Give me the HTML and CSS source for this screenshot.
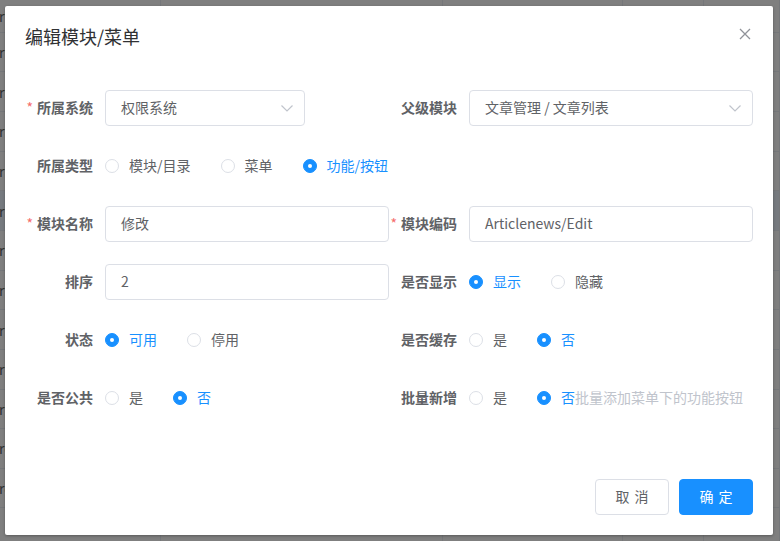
FILE: index.html
```html
<!DOCTYPE html>
<html lang="zh-CN">
<head>
<meta charset="utf-8">
<title>编辑模块/菜单</title>
<link rel="stylesheet" href="styles.css">
</head>
<body>
<div class="page">
  <div class="bg-table">
    <div class="bg-row head"><span class="c">rt</span><span class="c"></span><span class="c"></span><span class="c"></span><span class="c"></span></div>
    <div class="bg-row"><span class="c">rt</span><span class="c"></span><span class="c"></span><span class="c"></span><span class="c"></span></div>
    <div class="bg-row"><span class="c">rt</span><span class="c"></span><span class="c"></span><span class="c"></span><span class="c"></span></div>
    <div class="bg-row"><span class="c">rt</span><span class="c"></span><span class="c"></span><span class="c"></span><span class="c"></span></div>
    <div class="bg-row"><span class="c">rt</span><span class="c"></span><span class="c"></span><span class="c"></span><span class="c"></span></div>
    <div class="bg-row hl"><span class="c">rt</span><span class="c"></span><span class="c"></span><span class="c"></span><span class="c"></span></div>
    <div class="bg-row"><span class="c">rt</span><span class="c"></span><span class="c"></span><span class="c"></span><span class="c"></span></div>
    <div class="bg-row"><span class="c">rt</span><span class="c"></span><span class="c"></span><span class="c"></span><span class="c"></span></div>
    <div class="bg-row"><span class="c">rt</span><span class="c"></span><span class="c"></span><span class="c"></span><span class="c"></span></div>
    <div class="bg-row"><span class="c">rt</span><span class="c"></span><span class="c"></span><span class="c"></span><span class="c"></span></div>
    <div class="bg-row"><span class="c">rt</span><span class="c"></span><span class="c"></span><span class="c"></span><span class="c"></span></div>
    <div class="bg-row"><span class="c">re</span><span class="c"></span><span class="c"></span><span class="c"></span><span class="c"></span></div>
    <div class="bg-row"><span class="c">rd</span><span class="c"></span><span class="c"></span><span class="c"></span><span class="c"></span></div>
    <div class="bg-row"><span class="c"></span><span class="c"></span><span class="c"></span><span class="c"></span><span class="c"></span></div>
  </div>
  <div class="mask"></div>

  <div class="dialog">
    <div class="dialog-header">
      <span class="dialog-title">编辑模块/菜单</span>
      <button class="close" type="button" aria-label="关闭">
        <svg width="12" height="12" viewBox="0 0 12 12"><path d="M1 1L11 11M11 1L1 11" stroke="#909399" stroke-width="1.3" fill="none"/></svg>
      </button>
    </div>
    <div class="dialog-body">
      <div class="form">
        <div class="item">
          <label class="label"><span class="req">*</span>所属系统</label>
          <div class="content">
            <div class="select short"><span class="txt">权限系统</span>
              <svg class="arrow" width="14" height="14" viewBox="0 0 14 14"><path d="M1.5 4.5L7 10L12.5 4.5" stroke="#c0c4cc" stroke-width="1.2" fill="none"/></svg>
            </div>
          </div>
        </div>
        <div class="item">
          <label class="label">父级模块</label>
          <div class="content">
            <div class="select"><span class="txt">文章管理 / 文章列表</span>
              <svg class="arrow" width="14" height="14" viewBox="0 0 14 14"><path d="M1.5 4.5L7 10L12.5 4.5" stroke="#c0c4cc" stroke-width="1.2" fill="none"/></svg>
            </div>
          </div>
        </div>

        <div class="item">
          <label class="label">所属类型</label>
          <div class="content">
            <span class="radio"><span class="dot"></span><span class="rl">模块/目录</span></span>
            <span class="radio"><span class="dot"></span><span class="rl">菜单</span></span>
            <span class="radio on"><span class="dot"></span><span class="rl">功能/按钮</span></span>
          </div>
        </div>
        <div class="item"></div>

        <div class="item">
          <label class="label"><span class="req">*</span>模块名称</label>
          <div class="content"><div class="input"><span class="txt">修改</span></div></div>
        </div>
        <div class="item">
          <label class="label"><span class="req">*</span>模块编码</label>
          <div class="content"><div class="input"><span class="txt">Articlenews/Edit</span></div></div>
        </div>

        <div class="item">
          <label class="label">排序</label>
          <div class="content"><div class="input"><span class="txt">2</span></div></div>
        </div>
        <div class="item">
          <label class="label">是否显示</label>
          <div class="content">
            <span class="radio on"><span class="dot"></span><span class="rl">显示</span></span>
            <span class="radio"><span class="dot"></span><span class="rl">隐藏</span></span>
          </div>
        </div>

        <div class="item">
          <label class="label">状态</label>
          <div class="content">
            <span class="radio on"><span class="dot"></span><span class="rl">可用</span></span>
            <span class="radio"><span class="dot"></span><span class="rl">停用</span></span>
          </div>
        </div>
        <div class="item">
          <label class="label">是否缓存</label>
          <div class="content">
            <span class="radio"><span class="dot"></span><span class="rl">是</span></span>
            <span class="radio on"><span class="dot"></span><span class="rl">否</span></span>
          </div>
        </div>

        <div class="item">
          <label class="label">是否公共</label>
          <div class="content">
            <span class="radio"><span class="dot"></span><span class="rl">是</span></span>
            <span class="radio on"><span class="dot"></span><span class="rl">否</span></span>
          </div>
        </div>
        <div class="item">
          <label class="label">批量新增</label>
          <div class="content">
            <span class="radio"><span class="dot"></span><span class="rl">是</span></span>
            <span class="radio on last"><span class="dot"></span><span class="rl">否</span></span><span class="hint">批量添加菜单下的功能按钮</span>
          </div>
        </div>
      </div>
    </div>
    <div class="dialog-footer">
      <button class="btn" type="button">取 消</button>
      <button class="btn primary" type="button">确 定</button>
    </div>
  </div>
</div>
</body>
</html>
```

FILE: styles.css
```css
* { box-sizing: border-box; }

body {
  margin: 0;
  font-family: "Noto Sans CJK SC", "Liberation Sans", sans-serif;
  font-size: 14px;
  color: #606266;
}

.page {
  position: relative;
  width: 780px;
  height: 541px;
  overflow: hidden;
  background: #fff;
}

/* background table */
.bg-table {
  display: flex;
  flex-direction: column;
}
.bg-row {
  display: grid;
  grid-template-columns: 161px 282px 180px 81px 1fr;
  height: 39.67px;
  border-bottom: 1px solid #ebeef5;
  font-size: 14px;
  color: #606266;
  flex: 0 0 auto;
}
.bg-row.head { height: 32.6px; }
.bg-row.hl { background: #ecf5ff; }
.bg-row .c {
  border-right: 1px solid #ebeef5;
  display: flex;
  align-items: center;
}
.bg-row .c:first-child { margin-left: -1px; }

.mask {
  position: absolute;
  inset: 0;
  background: rgba(0, 0, 0, 0.5);
}

/* dialog */
.dialog {
  position: absolute;
  left: 5px;
  top: 6px;
  width: 768px;
  background: #fff;
  border-radius: 2px;
  box-shadow: 0 1px 3px rgba(0, 0, 0, 0.3);
}

.dialog-header {
  position: relative;
  padding: 18px 20px 12px;
}
.dialog-title {
  display: block;
  font-size: 18px;
  line-height: 24px;
  color: #303133;
}
.close {
  position: absolute;
  top: 20px;
  right: 20px;
  width: 16px;
  height: 16px;
  padding: 0;
  border: 0;
  background: transparent;
  display: flex;
  align-items: center;
  justify-content: center;
}

.dialog-body {
  padding: 30px 20px;
}

.form {
  display: grid;
  grid-template-columns: 364px 364px;
  grid-auto-rows: 36px;
  row-gap: 22px;
  padding-bottom: 22px;
}

.item {
  display: flex;
  align-items: center;
  height: 36px;
}

.label {
  flex: 0 0 80px;
  text-align: right;
  padding-right: 12px;
  padding-bottom: 2px;
  line-height: 34px;
  font-weight: 700;
  color: #606266;
  white-space: nowrap;
}
.req {
  color: #f56c6c;
  margin-right: 4px;
  font-weight: 400;
}

.content {
  flex: 1;
  display: flex;
  align-items: center;
  min-width: 0;
}

.input,
.select {
  width: 100%;
  height: 36px;
  border: 1px solid #dcdfe6;
  border-radius: 4px;
  padding: 0 15px;
  display: flex;
  align-items: center;
  color: #606266;
  background: #fff;
  white-space: nowrap;
}
.txt { padding-bottom: 2px; }
.select {
  justify-content: space-between;
  padding-right: 10px;
}
.select.short { width: 200px; }
.arrow { flex: 0 0 auto; }

/* radios */
.radio {
  display: inline-flex;
  align-items: center;
  margin-right: 30px;
  color: #606266;
  white-space: nowrap;
}
.radio.last { margin-right: 0; }
.dot {
  position: relative;
  width: 14px;
  height: 14px;
  border: 1px solid #dcdfe6;
  border-radius: 50%;
  background: #fff;
}
.rl { padding-left: 10px; padding-bottom: 2px; }
.radio.on .dot {
  background: #1890ff;
  border-color: #1890ff;
}
.radio.on .dot::after {
  content: "";
  position: absolute;
  left: 50%;
  top: 50%;
  width: 4px;
  height: 4px;
  margin: -2px 0 0 -2px;
  border-radius: 50%;
  background: #fff;
}
.radio.on .rl { color: #1890ff; }

.hint {
  color: #c0c4cc;
  white-space: nowrap;
  padding-bottom: 2px;
}

/* footer */
.dialog-footer {
  display: flex;
  justify-content: flex-end;
  gap: 10px;
  padding: 11px 20px 20px;
}
.btn {
  width: 74px;
  height: 36px;
  padding: 0 0 2px;
  border: 1px solid #dcdfe6;
  border-radius: 4px;
  background: #fff;
  color: #606266;
  font-family: inherit;
  font-size: 14px;
  word-spacing: 2px;
}
.btn.primary {
  background: #1890ff;
  border-color: #1890ff;
  color: #fff;
}
```
